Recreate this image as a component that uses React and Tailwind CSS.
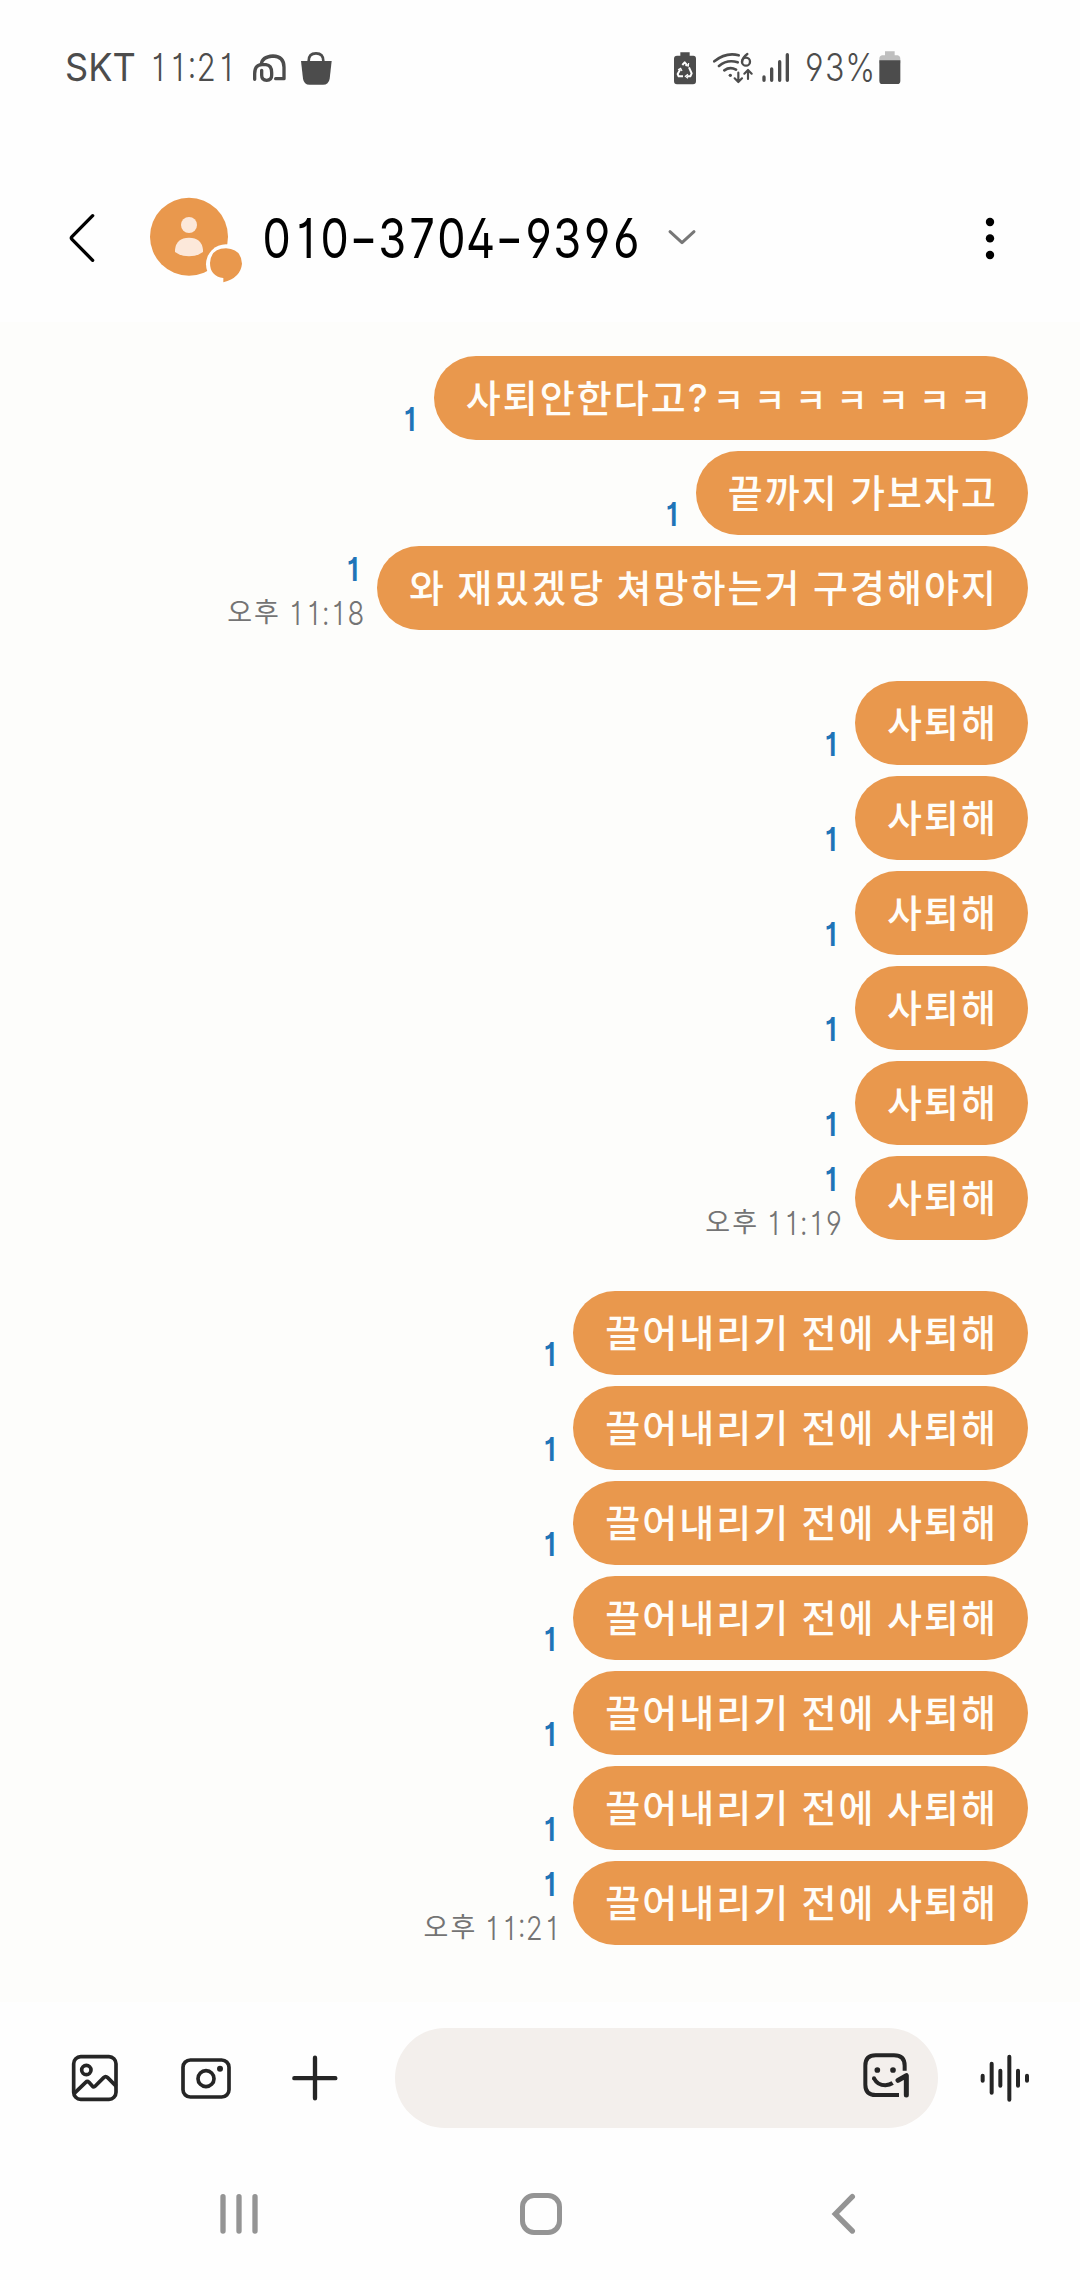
import React from "react";

const groups = [
  {
    time: "11:18",
    messages: ["사퇴안한다고?ㅋㅋㅋㅋㅋㅋㅋ", "끝까지 가보자고", "와 재밌겠당 쳐망하는거 구경해야지"],
  },
  {
    time: "11:19",
    messages: Array(6).fill("사퇴해"),
  },
  {
    time: "11:21",
    messages: Array(7).fill("끌어내리기 전에 사퇴해"),
  },
];

const StatusBar = () => (
  <div className="h-[154px] pt-[51px] text-[#4c4c4c]">
    <div className="flex items-center h-[34px]">
      <div className="ml-[65px] w-[83px] shrink-0">
        <span className="inline-block origin-left scale-x-[0.95] text-[38px] leading-[34px] whitespace-nowrap">SKT</span>
      </div>
      <div className="w-[104px] shrink-0">
        <Digits className="origin-left scale-x-[0.82] text-[38px] leading-[34px] font-light">11:21</Digits>
      </div>
      <svg className="w-[35px] h-[34px] shrink-0" viewBox="636 63 105 102" fill="none" stroke="currentColor" strokeWidth="10" strokeLinecap="round" strokeLinejoin="round">
        <path d="M644 148V131Q644 104 666 104H678Q695 106 695 128V136Q695 151 680 151Q665 151 665 136V121" />
        <path d="M664 103Q666 80 699 78Q732 79 732 112V146H707" />
      </svg>
      <svg className="ml-[13px] w-[32px] h-[34px] shrink-0" viewBox="781 63 96 102">
        <path d="M784 93H876L870 146Q867 164 850 164H810Q793 164 790 146Z" fill="currentColor" />
        <path d="M807 100V93Q807 70 829 70T851 93V100" fill="none" stroke="currentColor" strokeWidth="8" />
      </svg>
      <svg className="ml-[342px] w-[22px] h-[34px] shrink-0" viewBox="72 63 66 102">
        <path d="M91 67H119V77H130Q138 77 138 86V153Q138 163 129 163H81Q72 163 72 153V86Q72 77 81 77H91Z" fill="currentColor" />
        <path d="M97 105L104 97L112 106M117 112L125 130L121 139H111M99 139H86L83 132L91 118" fill="none" stroke="white" strokeWidth="6" strokeLinejoin="round" />
        <path d="M114 133L106 139L114 145M84 119L92 115L96 123M116 99L115 108L106 106" fill="none" stroke="white" strokeWidth="3.5" />
      </svg>
      <svg className="ml-[16px] w-[42px] h-[34px] shrink-0" viewBox="186 63 126 102" fill="none" stroke="currentColor" strokeWidth="8" strokeLinecap="round" strokeLinejoin="round">
        <path d="M193 94Q228 66 266 76M207 108Q232 87 263 97M223 121Q240 109 258 119" />
        <circle cx="241" cy="136" r="5" fill="currentColor" stroke="none" />
        <path d="M292 72Q277 83 276 96" strokeWidth="7" />
        <circle cx="288" cy="95" r="12" strokeWidth="7" />
        <path d="M265 128V154M254 145L265 156L276 145M294 147V121M283 131L294 120L305 131" strokeWidth="6.5" />
      </svg>
      <svg className="ml-[7px] w-[29px] h-[34px] shrink-0" viewBox="334 63 87 102" stroke="currentColor" strokeWidth="10" strokeLinecap="round">
        <path d="M343 141V151M366 117V151M390 95V151M413 74V151" />
      </svg>
      <div className="ml-[14px] w-[72px] shrink-0">
        <Digits className="origin-left scale-x-[0.84] text-[38px] leading-[34px] font-light">93%</Digits>
      </div>
      <svg className="ml-[3px] w-[22px] h-[34px] shrink-0" viewBox="689 63 66 102">
        <path d="M707 64H736V76H745Q753 78 753 87V100H690V87Q690 78 698 76H707Z" fill="#bfbfbf" />
        <path d="M690 91H753V152Q753 162 744 162H699Q690 162 690 152Z" fill="currentColor" />
      </svg>
    </div>
  </div>
);

// "1" and "-" get a full digit cell, the rest is already tabular
const Digits = ({ className, children }) => (
  <span
    className={
      "inline-block whitespace-nowrap font-['Inter','Noto_Sans_CJK_KR',sans-serif] [font-feature-settings:'tnum','cv02','cv03','cv04'] " +
      className
    }
  >
    {children.split(/([1-])/).map((part, i) => {
      if (part === "1") {
        return (
          <span key={i} className="inline-block w-[0.64em] text-center [font-feature-settings:'tnum'_0,'cv01']">
            1
          </span>
        );
      }
      if (part === "-") {
        return (
          <span key={i} className="inline-flex justify-center w-[0.64em]">
            <span className="scale-x-[1.35] [font-feature-settings:'tnum'_0]">-</span>
          </span>
        );
      }
      return part;
    })}
  </span>
);

const Header = () => (
  <header className="flex items-center h-[168px]">
    <svg className="ml-[68px] w-[28px] h-[50px] shrink-0" viewBox="84 130 84 150" fill="none" stroke="black" strokeWidth="10" strokeLinecap="round" strokeLinejoin="round">
      <path d="M158 138L96 201Q92 205 96 209L158 272" />
    </svg>
    <svg className="ml-[54px] w-[94px] h-[90px] shrink-0" viewBox="330 70 282 270">
      <circle cx="447" cy="201" r="117" fill="#e9984d" />
      <circle cx="447" cy="166" r="24" fill="#fce8da" />
      <path d="M405 247V240Q409 204 447 204T489 240V247Q472 260 447 260T405 247Z" fill="#fce8da" />
      <circle cx="558" cy="284" r="60" fill="#fefefe" />
      <path d="M550 338V325Q510 320 510 280Q512 237 558 236Q604 238 606 282Q602 324 550 338Z" fill="#e9984d" />
    </svg>
    <h1 className="ml-[18px] w-[405px] shrink-0 text-black text-[55px] leading-[60px]">
      <Digits className="origin-left scale-x-[0.82]">010-3704-9396</Digits>
    </h1>
    <svg className="w-[30px] h-[20px] shrink-0" viewBox="1252 145 90 60" fill="none" stroke="#777777" strokeWidth="9" strokeLinecap="round" strokeLinejoin="round">
      <path d="M1261 156L1297 189L1333 156" />
    </svg>
    <svg className="ml-[287px] w-[12px] h-[50px] shrink-0" viewBox="0 0 12 50">
      <circle cx="6" cy="9" r="4.2" />
      <circle cx="6" cy="25.4" r="4.2" />
      <circle cx="6" cy="42" r="4.2" />
    </svg>
  </header>
);

const Message = ({ text, time }) => {
  const laugh = text.indexOf("ㅋ");
  const body = laugh < 0 ? text : text.slice(0, laugh);
  return (
    <div className="flex justify-end items-end h-[84px]">
      <div className="flex flex-col items-end mr-[16px]">
        <span
          className={
            "inline-block mr-[2px] origin-right scale-x-[0.85] text-[33px] leading-[44px] font-semibold text-[#1f74b8] [font-feature-settings:'cv01'] " +
            (time ? "mb-[1px]" : "-mb-[1px]")
          }
        >
          1
        </span>
        {time && (
          <div className="flex items-center h-[38px] pt-[3px] text-[#747474]">
            <span className="text-[27px] leading-[38px] tracking-[2px]">오후</span>
            <div className="ml-[6px] w-[74px]">
              <Digits className="origin-left scale-x-[0.83] text-[33px] leading-[38px] font-light">{time}</Digits>
            </div>
          </div>
        )}
      </div>
      <div className="flex items-center h-[84px] pl-[32px] pr-[30px] rounded-[42px] bg-[#e9984d] text-[#fffdf8] text-[38px] leading-[84px] font-medium tracking-[2.04px] whitespace-pre">
        <span className="[word-spacing:-0.8px]">{body}</span>
        {laugh >= 0 && <span className="ml-[3px] -mr-[3px] pt-[6px] text-[34px] tracking-[9.9px]">{text.slice(laugh)}</span>}
      </div>
    </div>
  );
};

const Composer = () => (
  <div className="flex items-center h-[152px] text-[#252525]">
    <svg className="ml-[71px] w-[48px] h-[50px]" viewBox="92 100 144 150" fill="none" stroke="currentColor" strokeWidth="11" strokeLinejoin="round">
      <rect x="100" y="111" width="127" height="128" rx="21" />
      <circle cx="138" cy="151" r="14" />
      <path d="M101 222L136 188Q141 183 146 188L156 199Q160 204 165 199L190 174Q196 168 202 174L228 200" />
    </svg>
    <svg className="ml-[61px] w-[52px] h-[50px]" viewBox="418 100 156 150" fill="none" stroke="currentColor" strokeWidth="11">
      <rect x="427" y="121" width="138" height="111" rx="22" />
      <circle cx="496" cy="177" r="24" />
      <circle cx="538" cy="147" r="9" fill="currentColor" stroke="none" />
    </svg>
    <svg className="ml-[59px] w-[48px] h-[50px]" viewBox="752 100 144 150" stroke="currentColor" strokeWidth="13" strokeLinecap="round">
      <path d="M824 114V236M762 175.500H885" />
    </svg>
    <div className="flex items-center justify-end ml-[56px] w-[543px] h-[100px] pr-[26px] rounded-full bg-[#f3efec]">
      <svg className="w-[50px] h-[50px]" viewBox="309 100 150 150" overflow="visible" fill="none" stroke="currentColor" strokeWidth="12" strokeLinecap="round" strokeLinejoin="round">
        <path d="M437 153V138Q437 107 405 107H350Q319 107 319 138V195Q319 226 350 226H420" strokeLinecap="butt" />
        <circle cx="355" cy="151" r="8.500" fill="currentColor" stroke="none" />
        <circle cx="402" cy="151" r="8.500" fill="currentColor" stroke="none" />
        <path d="M345 176Q356 197 379 197Q392 196 401 190" strokeLinecap="butt" />
        <circle cx="345" cy="176" r="6" fill="currentColor" stroke="none" />
        <path d="M417 182L442 168V226" strokeWidth="15" />
      </svg>
    </div>
    <svg className="ml-[41px] w-[52px] h-[50px]" viewBox="656 100 156 150" stroke="currentColor" strokeWidth="12" strokeLinecap="round">
      <path d="M667 168V183M694 132V219M720 153V198M747 111V240M773 153V198M800 168V183" />
    </svg>
  </div>
);

const NavBar = () => (
  <nav className="flex items-center h-[120px] text-[#949494]">
    <svg className="ml-[219px] w-[40px] h-[42px]" viewBox="537 519 120 126" stroke="currentColor" strokeWidth="16" strokeLinecap="round">
      <path d="M549 530V633M597 530V633M645 530V633" />
    </svg>
    <div className="ml-[261px] w-[42px] h-[42px] border-[5px] border-current rounded-[14px]" />
    <svg className="ml-[268px] w-[28px] h-[42px]" viewBox="210 519 84 126" fill="none" stroke="currentColor" strokeWidth="16" strokeLinecap="round">
      <path d="M277 530L226 582L277 633" />
    </svg>
  </nav>
);

const App = () => {
  return (
    <div className="w-[1080px] h-[2280px] overflow-hidden bg-[#fefefe] font-['Inter','Noto_Sans_CJK_KR',sans-serif]">
      <StatusBar />
      <Header />
      <main className="flex flex-col gap-[51px] h-[1680px] pt-[34px] pr-[52px] bg-[#fdfdfb]">
        {groups.map((group) => (
          <section key={group.time} className="flex flex-col gap-[11px]">
            {group.messages.map((text, i) => (
              <Message key={i} text={text} time={i === group.messages.length - 1 ? group.time : null} />
            ))}
          </section>
        ))}
      </main>
      <Composer />
      <NavBar />
    </div>
  );
};

export default App;
